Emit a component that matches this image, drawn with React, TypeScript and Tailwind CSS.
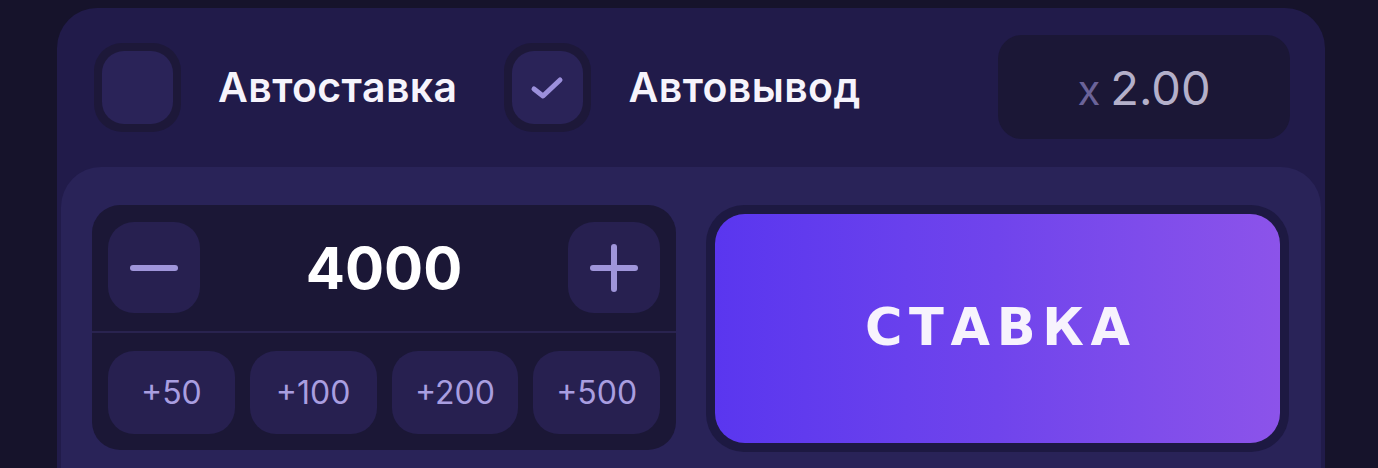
import React from "react";

const chips = ["+50", "+100", "+200", "+500"];

function CheckBox({ checked }: { checked?: boolean }) {
  return (
    <div className="w-[87px] h-[89px] rounded-[28px] bg-[#1d1839] flex items-center justify-center shrink-0">
      <div className="w-[71px] h-[73px] rounded-[22px] bg-[#2a2358] flex items-center justify-center">
        {checked && (
          <svg width="34" height="24" viewBox="0 0 34 24" fill="none">
            <path
              d="M4 13 L13 20 L30 4"
              stroke="#9c90dc"
              strokeWidth="5"
              strokeLinecap="round"
              strokeLinejoin="round"
            />
          </svg>
        )}
      </div>
    </div>
  );
}

function StepButton({ plus }: { plus?: boolean }) {
  return (
    <button className="w-[92px] h-[91px] rounded-[26px] bg-[#272050] flex items-center justify-center shrink-0">
      <svg width="48" height="48" viewBox="0 0 48 48" fill="none">
        <path d="M3 24 H45" stroke="#9f95da" strokeWidth="6" strokeLinecap="round" />
        {plus && <path d="M24 3 V45" stroke="#9f95da" strokeWidth="6" strokeLinecap="round" />}
      </svg>
    </button>
  );
}

export default function App() {
  return (
    <div
      className="w-[1378px] h-[468px] bg-[#16132b] overflow-hidden pt-[8px] pl-[57px]"
      style={{ fontFamily: "Inter, 'Noto Sans', sans-serif" }}
    >
      <div className="w-[1268px] h-[520px] rounded-[40px] bg-[#211b4a] flex flex-col">
        {/* top row */}
        <div className="h-[159px] flex items-center pl-[37px] pr-[35px]">
          <CheckBox />
          <span className="ml-[37px] text-[41px] font-semibold text-[#f6f4fc] tracking-[0.01em]">
            Автоставка
          </span>
          <div className="ml-[46px]">
            <CheckBox checked />
          </div>
          <span className="ml-[38px] text-[41px] font-semibold text-[#f6f4fc] tracking-[0.01em]">
            Автовывод
          </span>
          <div className="ml-auto w-[292px] h-[104px] rounded-[24px] bg-[#1b1736] flex items-baseline justify-center gap-[10px] pt-[18px] mt-[-2px]">
            <span className="text-[42px] text-[#6b6399]">x</span>
            <span className="text-[47px] text-[#b4b0ca]">2.00</span>
          </div>
        </div>

        {/* lower panel */}
        <div className="mx-[4px] flex-1 rounded-[40px] bg-[#292358] flex pt-[38px] pl-[31px] pr-[31px] gap-[30px]">
          <div className="w-[584px] h-[245px] rounded-[28px] bg-[#1b1736] flex flex-col">
            <div className="flex items-center justify-between px-[16px] pt-[17px] pb-[18px] border-b-2 border-[#29234f]">
              <StepButton />
              <span className="text-[58px] font-bold text-white leading-none">4000</span>
              <StepButton plus />
            </div>
            <div className="flex gap-[15px] px-[16px] pt-[18px]">
              {chips.map((c) => (
                <button
                  key={c}
                  className="w-[127px] h-[83px] rounded-[26px] bg-[#272050] text-[#a99ee0] text-[32px]"
                >
                  {c}
                </button>
              ))}
            </div>
          </div>

          <div className="w-[583px] h-[247px] rounded-[38px] bg-[#1d1942] p-[9px]">
            <button className="w-full h-full rounded-[30px] bg-gradient-to-r from-[#5a36ef] via-[#7044ec] to-[#8c53ea] flex items-center justify-center">
              <span
                className="text-[51px] font-extrabold text-[#f7f3fd] tracking-[0.13em] pl-[0.13em]"
                style={{ fontFamily: "'DejaVu Sans', Inter, sans-serif" }}
              >
                СТАВКА
              </span>
            </button>
          </div>
        </div>
      </div>
    </div>
  );
}
